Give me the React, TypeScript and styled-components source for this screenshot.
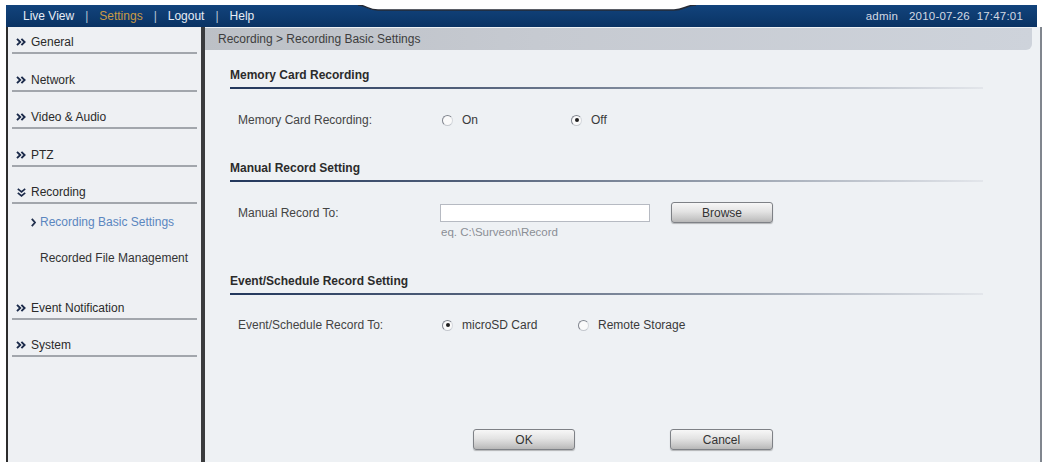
import React from "react";
import styled, { createGlobalStyle } from "styled-components";

const Global = createGlobalStyle`
  html, body, #root { height: 100%; }
  body {
    margin: 0;
    background: #ffffff;
    font-family: "Liberation Sans", Arial, sans-serif;
    font-size: 12px;
    color: #333;
  }
  * { box-sizing: border-box; }
`;

const Page = styled.div`
  height: 100vh;
  padding: 5px 1px 0 6px;
  display: flex;
  flex-direction: column;
  overflow: hidden;
`;

const Header = styled.div`
  position: relative;
  height: 22px;
  flex: none;
  background: linear-gradient(to bottom, #12437c 0%, #0d3a6e 60%, #0a3263 100%);
  display: flex;
  align-items: center;
  justify-content: space-between;
  padding: 0 14px 0 17px;
  margin-right: 5px;
`;

const Nav = styled.div`
  display: flex;
  align-items: center;
  font-size: 12px;
  color: #e6ecf5;
  position: relative;
  z-index: 1;
`;

const NavLink = styled.span<{ $active?: boolean }>`
  color: ${(p) => (p.$active ? "#c99a45" : "#e6ecf5")};
`;

const NavSep = styled.span`
  color: #b9c4d6;
  margin: 0 11px;
`;

const Status = styled.div`
  display: flex;
  gap: 11px;
  color: #d3d9e3;
  font-size: 11.5px;
  letter-spacing: 0.2px;
`;

const TabNotch = styled.svg`
  position: absolute;
  left: 352px;
  top: 0;
`;

const Frame = styled.div`
  flex: 1;
  min-height: 0;
  display: flex;
  border-left: 2px solid #2c2c2c;
  border-right: 2px solid #80868e;
`;

const Sidebar = styled.div`
  width: 197px;
  flex: none;
  background: #eef0f3;
  border-right: 4px solid #3a3b3d;
  display: flex;
  flex-direction: column;
`;

const MenuItem = styled.div<{ $first?: boolean }>`
  height: ${(p) => (p.$first ? "27px" : "37.5px")};
  flex: none;
  margin: 0 4px;
  padding: 0 0 3px 4px;
  border-bottom: 2px solid #a2a6ac;
  display: flex;
  align-items: flex-end;
  gap: 5px;
  color: #2a2a2a;
  font-size: 12px;
  line-height: 14px;
`;

const IconBox = styled.span`
  width: 10px;
  height: 14px;
  display: inline-flex;
  align-items: center;
  justify-content: center;
  flex: none;
`;

const SubMenu = styled.div`
  display: flex;
  flex-direction: column;
  padding-bottom: 6px;
`;

const SubItem = styled.div<{ $active?: boolean }>`
  height: 36px;
  display: flex;
  align-items: center;
  gap: 4px;
  padding-left: ${(p) => (p.$active ? "23px" : "32px")};
  color: ${(p) => (p.$active ? "#5a86bf" : "#333")};
  font-size: 12px;
  white-space: nowrap;
`;

const Content = styled.div`
  flex: 1;
  min-width: 0;
  background: #eef1f4;
  display: flex;
  flex-direction: column;
`;

const Breadcrumb = styled.div`
  margin: 1px 8px 0 0;
  height: 22px;
  flex: none;
  padding-left: 13px;
  display: flex;
  align-items: center;
  color: #3d3d3d;
  font-size: 12px;
  background: linear-gradient(to right, #bcc0c6 0%, #c6cad1 40%, #ced3db 100%);
  border-radius: 0 0 6px 0;
`;

const Form = styled.div`
  padding-left: 25px;
  display: flex;
  flex-direction: column;
`;

const SectionHeading = styled.div<{ $top: number }>`
  width: 753px;
  margin-top: ${(p) => p.$top}px;
  padding-bottom: 5px;
  font-weight: bold;
  font-size: 12px;
  line-height: 14px;
  color: #2b2b2b;
  border-bottom: 2px solid #3a4b6a;
  border-image: linear-gradient(to right, #22375c 0%, #4f5e78 30%, #97a0ad 65%, #e3e6eb 100%) 1;
`;

const Row = styled.div<{ $top: number }>`
  margin-top: ${(p) => p.$top}px;
  display: flex;
  align-items: center;
  min-height: 22px;
`;

const TopRow = styled(Row)`
  align-items: flex-start;
`;

const Label = styled.div<{ $offset?: number }>`
  width: 210px;
  padding-left: 8px;
  color: #444;
  font-size: 12px;
  line-height: 14px;
  margin-top: ${(p) => p.$offset ?? 0}px;
`;

const RadioOption = styled.label<{ $width?: number }>`
  display: flex;
  align-items: center;
  gap: 9px;
  width: ${(p) => (p.$width ? `${p.$width}px` : "auto")};
  color: #3a3a3a;
  font-size: 12px;
  padding-left: 2px;
`;

const RadioCircle = styled.span<{ $checked?: boolean }>`
  width: 11px;
  height: 11px;
  border-radius: 50%;
  border: 1px solid #80858e;
  border-right-color: #d4d7dc;
  border-bottom-color: #c4c8ce;
  background: #fafafa;
  display: inline-flex;
  align-items: center;
  justify-content: center;
  flex: none;
  &::after {
    content: "";
    width: 4px;
    height: 4px;
    border-radius: 50%;
    background: ${(p) => (p.$checked ? "#1e1e1e" : "transparent")};
  }
`;

const FieldColumn = styled.div`
  display: flex;
  flex-direction: column;
`;

const TextInput = styled.div`
  width: 210px;
  height: 18px;
  margin-top: 2px;
  background: #ffffff;
  border: 1px solid #b6bac2;
`;

const Hint = styled.div`
  margin-top: 3px;
  color: #8a8e94;
  font-size: 11.5px;
  line-height: 14px;
  padding-left: 1px;
`;

const Button = styled.div<{ $width?: number }>`
  width: ${(p) => p.$width ?? 102}px;
  height: 21px;
  border: 1px solid #7e8186;
  border-radius: 3px;
  background: linear-gradient(to bottom, #f7f7f7 0%, #e3e3e3 45%, #c9c9c9 80%, #b7b7b7 100%);
  box-shadow: 0 1px 1px rgba(0, 0, 0, 0.25);
  display: flex;
  align-items: center;
  justify-content: center;
  color: #333;
  font-size: 12px;
  flex: none;
`;

const BrowseButton = styled(Button)`
  margin-left: 21px;
`;

const ButtonRow = styled.div`
  margin-top: 93px;
  padding-left: 268px;
  display: flex;
  gap: 95px;
`;

const DoubleRight = () => (
  <svg width="10" height="8" viewBox="0 0 10 8">
    <path d="M1 0.8 L4.2 4 L1 7.2 M5.4 0.8 L8.6 4 L5.4 7.2" fill="none" stroke="#1b2a4a" strokeWidth="1.9" />
  </svg>
);

const DoubleDown = () => (
  <svg width="9" height="9" viewBox="0 0 9 9">
    <path d="M0.8 0.8 L4.5 3.8 L8.2 0.8 M0.8 4.8 L4.5 7.8 L8.2 4.8" fill="none" stroke="#1b2a4a" strokeWidth="1.7" />
  </svg>
);

const SingleRight = () => (
  <svg width="5" height="9" viewBox="0 0 5 9">
    <path d="M0.8 0.8 L4 4.5 L0.8 8.2" fill="none" stroke="#22304e" strokeWidth="1.8" />
  </svg>
);

const menuTop = [
  { name: "General", first: true },
  { name: "Network" },
  { name: "Video & Audio" },
  { name: "PTZ" },
];

export default function App() {
  return (
    <>
      <Global />
      <Page>
        <Header>
          <TabNotch width="340" height="8" viewBox="0 0 340 8">
            <path d="M0 0 C8 0 10 5 20 5 L316 5 C326 5 328 0 338 0 Z" fill="#ffffff" />
            <path d="M0 0 C8 0 10 5 20 5 L316 5 C326 5 328 0 338 0" fill="none" stroke="#262b36" strokeWidth="1.4" />
          </TabNotch>
          <Nav>
            <NavLink>Live View</NavLink>
            <NavSep>|</NavSep>
            <NavLink $active>Settings</NavLink>
            <NavSep>|</NavSep>
            <NavLink>Logout</NavLink>
            <NavSep>|</NavSep>
            <NavLink>Help</NavLink>
          </Nav>
          <Status>
            <span>admin</span>
            <span>2010-07-26&nbsp;&nbsp;17:47:01</span>
          </Status>
        </Header>
        <Frame>
          <Sidebar>
            {menuTop.map((m) => (
              <MenuItem key={m.name} $first={m.first}>
                <IconBox>
                  <DoubleRight />
                </IconBox>
                {m.name}
              </MenuItem>
            ))}
            <MenuItem>
              <IconBox>
                <DoubleDown />
              </IconBox>
              Recording
            </MenuItem>
            <SubMenu>
              <SubItem $active>
                <SingleRight />
                Recording Basic Settings
              </SubItem>
              <SubItem>Recorded File Management</SubItem>
            </SubMenu>
            <MenuItem>
              <IconBox>
                <DoubleRight />
              </IconBox>
              Event Notification
            </MenuItem>
            <MenuItem>
              <IconBox>
                <DoubleRight />
              </IconBox>
              System
            </MenuItem>
          </Sidebar>
          <Content>
            <Breadcrumb>Recording &gt; Recording Basic Settings</Breadcrumb>
            <Form>
              <SectionHeading $top={18}>Memory Card Recording</SectionHeading>
              <Row $top={20}>
                <Label>Memory Card Recording:</Label>
                <RadioOption $width={129}>
                  <RadioCircle />
                  On
                </RadioOption>
                <RadioOption>
                  <RadioCircle $checked />
                  Off
                </RadioOption>
              </Row>

              <SectionHeading $top={30}>Manual Record Setting</SectionHeading>
              <TopRow $top={20}>
                <Label $offset={4}>Manual Record To:</Label>
                <FieldColumn>
                  <TextInput />
                  <Hint>eq. C:\Surveon\Record</Hint>
                </FieldColumn>
                <BrowseButton>Browse</BrowseButton>
              </TopRow>

              <SectionHeading $top={35}>Event/Schedule Record Setting</SectionHeading>
              <Row $top={19}>
                <Label>Event/Schedule Record To:</Label>
                <RadioOption $width={136}>
                  <RadioCircle $checked />
                  microSD Card
                </RadioOption>
                <RadioOption>
                  <RadioCircle />
                  Remote Storage
                </RadioOption>
              </Row>
            </Form>
            <ButtonRow>
              <Button $width={102}>OK</Button>
              <Button $width={103}>Cancel</Button>
            </ButtonRow>
          </Content>
        </Frame>
      </Page>
    </>
  );
}
